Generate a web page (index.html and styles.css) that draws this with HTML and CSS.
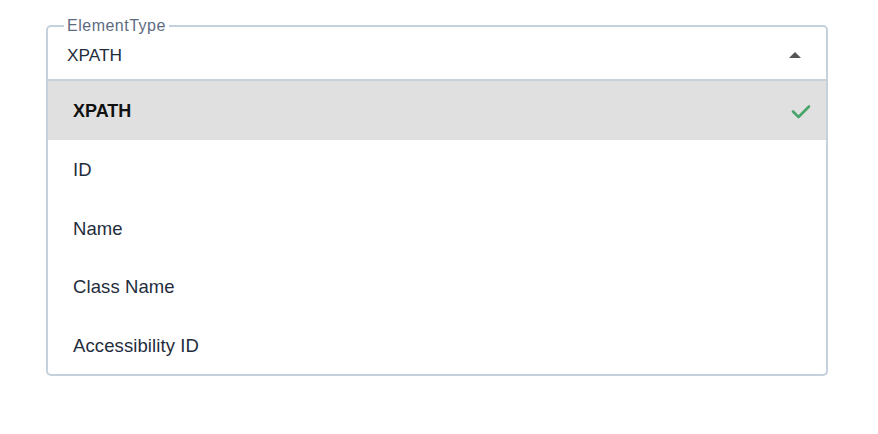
FILE: index.html
```html
<!DOCTYPE html>
<html lang="en">
<head>
<meta charset="utf-8">
<title>ElementType</title>
<link rel="stylesheet" href="styles.css">
</head>
<body>
<div class="field">
  <fieldset class="select">
    <legend class="legend">ElementType</legend>
    <div class="value-row">
      <span class="value">XPATH</span>
      <span class="caret"></span>
    </div>
  </fieldset>
  <ul class="menu">
    <li class="option selected">
      <span>XPATH</span>
      <svg class="check" width="20" height="15" viewBox="0 0 20 15"><path d="M2 7.5 L7.5 13 L18 2.5" fill="none" stroke="#4aa56c" stroke-width="2.6" stroke-linecap="round" stroke-linejoin="round"/></svg>
    </li>
    <li class="option">ID</li>
    <li class="option">Name</li>
    <li class="option">Class Name</li>
    <li class="option">Accessibility ID</li>
  </ul>
</div>
</body>
</html>
```
FILE: styles.css
```css
html, body {
  margin: 0;
  background: #ffffff;
}
body {
  font-family: "Liberation Sans", Arial, Helvetica, sans-serif;
  color: #1f2d3d;
}
.field {
  margin: 17px 0 0 46px;
  width: 782px;
}
.select {
  box-sizing: border-box;
  width: 100%;
  margin: 0;
  padding: 10px 19px 14px 19px;
  border: 2px solid #c5d1dc;
  border-radius: 5px 5px 0 0;
}
.legend {
  padding: 0 3px;
  margin-left: -3px;
  font-size: 16px;
  line-height: 18px;
  color: #5d6b82;
  letter-spacing: 0.5px;
}
.value-row {
  display: flex;
  align-items: center;
  justify-content: space-between;
  height: 20px;
}
.value {
  font-size: 17.3px;
  line-height: 20px;
}
.caret {
  width: 0;
  height: 0;
  margin-right: 6px;
  border-left: 6px solid transparent;
  border-right: 6px solid transparent;
  border-bottom: 6px solid #555555;
}
.menu {
  list-style: none;
  margin: 0;
  padding: 0;
  border: 2px solid #c5d1dc;
  border-top: none;
  border-radius: 0 0 5px 5px;
  box-sizing: border-box;
}
.option {
  box-sizing: border-box;
  display: flex;
  align-items: center;
  justify-content: space-between;
  height: 58.5px;
  padding: 3px 15px 0 25px;
  font-size: 18.5px;
  letter-spacing: 0.1px;
}
.option.selected {
  background: #e0e0e0;
  font-weight: bold;
  font-size: 18px;
  letter-spacing: 0;
  color: #111111;
}
.check {
  display: block;
}
```
